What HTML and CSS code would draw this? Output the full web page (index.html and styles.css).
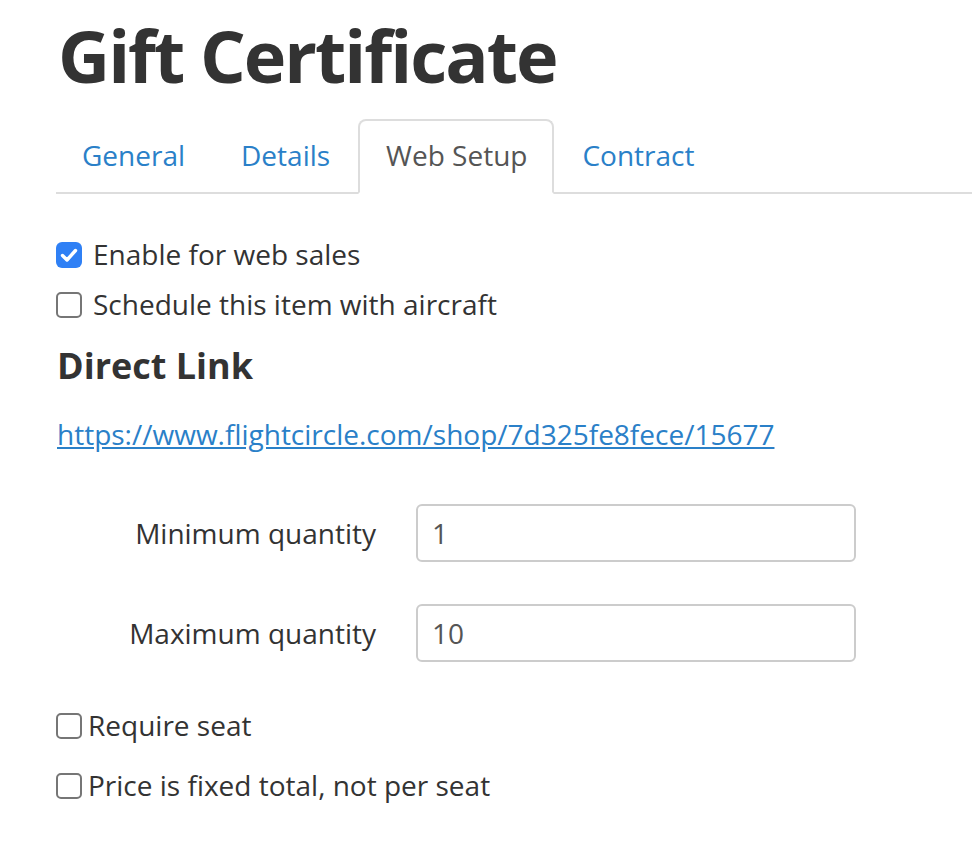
FILE: index.html
```html
<!DOCTYPE html>
<html>
<head>
<meta charset="utf-8">
<link rel="stylesheet" href="styles.css">
</head>
<body>
<div class="page">
  <h1 class="title">Gift Certificate</h1>
  <ul class="tabs">
    <li class="tab"><a href="#">General</a></li>
    <li class="tab"><a href="#">Details</a></li>
    <li class="tab active"><a href="#">Web Setup</a></li>
    <li class="tab"><a href="#">Contract</a></li>
  </ul>
  <div class="pane">
    <label class="check"><span class="box checked"><svg viewBox="0 0 26 26" width="26" height="26"><path d="M6.5 13.5 L11 18 L19.5 8.5" fill="none" stroke="#fff" stroke-width="3.4" stroke-linecap="round" stroke-linejoin="round"/></svg></span><span class="lbl">Enable for web sales</span></label>
    <label class="check"><span class="box"></span><span class="lbl">Schedule this item with aircraft</span></label>
    <h2 class="subhead">Direct Link</h2>
    <p class="linkrow"><a href="#">https://www.flightcircle.com/shop/7d325fe8fece/15677</a></p>
    <div class="form">
      <div class="row"><label class="flabel">Minimum quantity</label><div class="input">1</div></div>
      <div class="row"><label class="flabel">Maximum quantity</label><div class="input">10</div></div>
    </div>
    <label class="check tight"><span class="box"></span><span class="lbl">Require seat</span></label>
    <label class="check tight"><span class="box"></span><span class="lbl">Price is fixed total, not per seat</span></label>
  </div>
</div>
</body>
</html>
```

FILE: styles.css
```css
html, body { margin: 0; padding: 0; background: #fff; }
body { font-family: "Open Sans", "Liberation Sans", sans-serif; color: #333; overflow: hidden; }
.page { padding-left: 56px; }
.title {
  margin: 0;
  padding-top: 10px;
  padding-left: 2px;
  font-size: 72px;
  font-weight: 700;
  line-height: 90px;
  letter-spacing: -2px;
  color: #333;
}
.tabs {
  list-style: none;
  margin: 19px 0 0 0;
  padding: 0;
  display: flex;
  border-bottom: 2px solid #ddd;
  height: 73px;
}
.tab { margin-bottom: -2px; }
.tab:first-child { margin-left: -2px; }
.tab a {
  display: block;
  height: 75px;
  box-sizing: border-box;
  padding: 0 26px 0 26px;
  line-height: 69px;
  font-size: 28px;
  color: #2a80c8;
  text-decoration: none;
  border: 2px solid transparent;
  border-radius: 8px 8px 0 0;
}
.tab.active a {
  padding: 0 25px 0 26px;
  color: #555;
  border-color: #ddd;
  border-bottom-color: #fff;
  background: #fff;
}
.pane { padding-top: 48px; }
.check { display: flex; align-items: center; height: 26px; margin-bottom: 24px; font-size: 28px; }
.check .lbl { position: relative; top: -1px; }
.check .box {
  width: 22px; height: 22px;
  border: 2px solid #767676;
  border-radius: 5px;
  flex: none;
  margin-right: 11px;
  background: #fff;
}
.check .box.checked {
  width: 26px; height: 26px;
  border: 0;
  background: #2f80f5;
  border-radius: 6px;
}
.check .box svg { display: block; }
.check.tight .box { margin-right: 6px; }
.subhead {
  margin: 28px 0 0 1px;
  font-size: 36px;
  font-weight: 700;
  line-height: 40px;
}
.linkrow { margin: 30px 0 0 1px; font-size: 28px; line-height: 36px; }
.linkrow a { color: #2a80c8; text-decoration: underline; }
.form { padding-top: 52px; }
.row { display: flex; align-items: center; margin-bottom: 42px; }
.row:last-child { margin-bottom: 0; }
.flabel { width: 320px; text-align: right; font-size: 28px; }
.input {
  margin-left: 40px;
  width: 440px;
  height: 58px;
  box-sizing: border-box;
  border: 2px solid #ccc;
  border-radius: 6px;
  padding-left: 14px;
  font-size: 28px;
  line-height: 54px;
  color: #555;
}
.form + .check { margin-top: 51px; }
.check.tight { margin-bottom: 34px; }
```
